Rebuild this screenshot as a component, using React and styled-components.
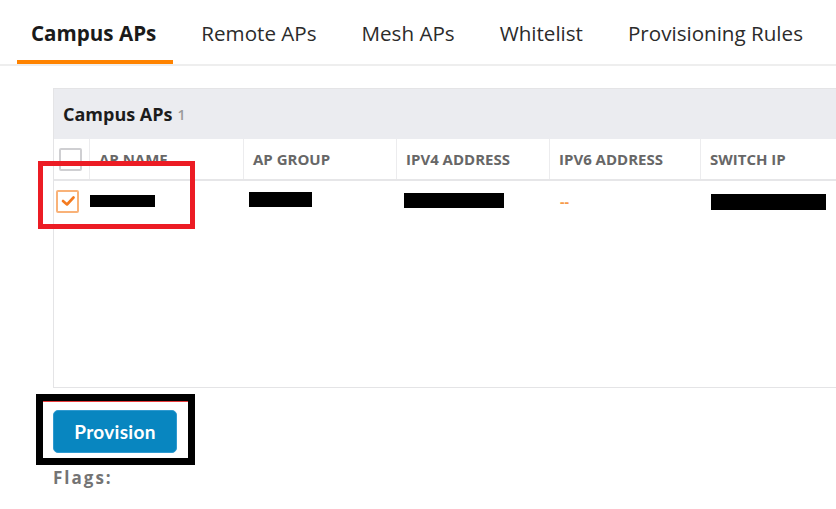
import React from "react";
import styled, { createGlobalStyle } from "styled-components";

// page defaults
const GlobalStyle = createGlobalStyle`
  body {
    margin: 0;
    background: #ffffff;
    font-family: "Open Sans", "Liberation Sans", sans-serif;
    overflow: hidden;
  }
`;

const tabs = ["Campus APs", "Remote APs", "Mesh APs", "Whitelist", "Provisioning Rules"];

const columns = [
  { label: "AP Name", width: 154 },
  { label: "AP Group", width: 153 },
  { label: "IPv4 Address", width: 153 },
  { label: "IPv6 Address", width: 151 },
  { label: "Switch IP", width: 200 },
];

const gridCols = `36px ${columns.map((c) => c.width + "px").join(" ")}`;

function CheckMark() {
  return (
    <svg width="14" height="12" viewBox="0 0 14 12">
      <polyline
        points="2,6 6,9.5 12.5,2.5"
        fill="none"
        stroke="#f47b20"
        strokeWidth="2.6"
        strokeLinecap="round"
        strokeLinejoin="round"
      />
    </svg>
  );
}

export default function App() {
  return (
    <Page>
      <GlobalStyle />
      <TabBar>
        {tabs.map((t, i) => (
          <Tab key={t} $active={i === 0}>
            {t}
          </Tab>
        ))}
      </TabBar>

      <Panel>
        <PanelHead>
          Campus APs <Count>1</Count>
        </PanelHead>
        <HeadRow>
          <HeadCell $first>
            <Check />
          </HeadCell>
          {columns.map((c) => (
            <HeadCell key={c.label}>{c.label}</HeadCell>
          ))}
        </HeadRow>
        <Row>
          <Cell>
            <Check $checked>
              <CheckMark />
            </Check>
          </Cell>
          <Cell>
            <Redacted $w={65} $h={12} $dx={-10} $dy={0} />
          </Cell>
          <Cell>
            <Redacted $w={63} $h={15} $dx={-5} $dy={-2} />
          </Cell>
          <Cell>
            <Redacted $w={100} $h={15} $dx={-3} $dy={-1} />
          </Cell>
          <Cell>
            <Dash>--</Dash>
          </Cell>
          <Cell>
            <Redacted $w={115} $h={16} $dx={0} $dy={1} />
          </Cell>
        </Row>
      </Panel>

      <Highlight>
        <ProvisionButton>Provision</ProvisionButton>
      </Highlight>

      <Flags>Flags:</Flags>

      {/* red annotation drawn over the selected row */}
      <RedMark />
    </Page>
  );
}

const Page = styled.div`
  position: relative;
  width: 836px;
  height: 509px;
  overflow: hidden;
`;

const TabBar = styled.div`
  display: flex;
  align-items: flex-end;
  height: 64px;
  padding-left: 17px;
  gap: 14px;
  border-bottom: 2px solid #eeeeee;
`;

const Tab = styled.div`
  height: 64px;
  box-sizing: border-box;
  padding: 19px 17px 0 14px;
  font-size: 20.6px;
  font-weight: ${(p) => (p.$active ? 700 : 400)};
  color: ${(p) => (p.$active ? "#1a1a1a" : "#2b2b2b")};
  white-space: nowrap;
  border-bottom: 4px solid ${(p) => (p.$active ? "#ff8300" : "transparent")};
`;

const Panel = styled.div`
  margin: 22px 0 0 53px;
  width: 900px;
  height: 300px;
  box-sizing: border-box;
  border: 1px solid #e4e4e6;
`;

const PanelHead = styled.div`
  height: 50px;
  display: flex;
  align-items: center;
  padding-left: 9px;
  background: #ebecf0;
  font-size: 18px;
  font-weight: 700;
  color: #1c1c1c;
`;

const Count = styled.span`
  margin-left: 5px;
  font-size: 14px;
  font-weight: 600;
  color: #9a9a9a;
`;

const HeadRow = styled.div`
  display: grid;
  grid-template-columns: ${gridCols};
  height: 40px;
  border-bottom: 2px solid #e6e6e8;
`;

const HeadCell = styled.div`
  display: flex;
  align-items: center;
  padding-left: ${(p) => (p.$first ? "5px" : "9px")};
  border-right: 1px solid #ececee;
  font-size: 15px;
  font-weight: 700;
  color: #676767;
  text-transform: uppercase;
  white-space: nowrap;
`;

const Row = styled.div`
  display: grid;
  grid-template-columns: ${gridCols};
  height: 40px;
`;

const Cell = styled.div`
  display: flex;
  align-items: center;
  padding-left: 10px;
  &:first-child {
    padding-left: 2px;
  }
`;

const Check = styled.span`
  display: inline-flex;
  align-items: center;
  justify-content: center;
  width: 23px;
  height: 23px;
  box-sizing: border-box;
  border: 2px solid ${(p) => (p.$checked ? "#f9b278" : "#cfcfd2")};
  border-radius: 2px;
  background: #fff;
`;

const Redacted = styled.span`
  display: inline-block;
  width: ${(p) => p.$w}px;
  height: ${(p) => p.$h}px;
  background: #000;
  position: relative;
  left: ${(p) => p.$dx}px;
  top: ${(p) => p.$dy}px;
`;

const Dash = styled.span`
  font-size: 14px;
  font-weight: 700;
  color: #f79a4a;
`;

const Highlight = styled.div`
  display: inline-block;
  margin: 6px 0 0 36px;
  padding: 9px 11px 5px 10px;
  border: 7px solid #000;
  box-shadow: inset 0 1px 0 #e83a3a;
`;

const ProvisionButton = styled.button`
  display: block;
  width: 124px;
  height: 43px;
  border: 1px solid #2f9ad0;
  border-radius: 5px;
  background: #0886c0;
  color: #ffffff;
  font-family: "Lato", "Liberation Sans", sans-serif;
  font-size: 19px;
  font-weight: 700;
  letter-spacing: 0.3px;
`;

const Flags = styled.div`
  margin: 1px 0 0 53px;
  font-size: 17px;
  font-weight: 700;
  letter-spacing: 2px;
  color: #747474;
`;

const RedMark = styled.div`
  position: absolute;
  left: 38px;
  top: 161px;
  width: 157px;
  height: 68px;
  box-sizing: border-box;
  border: 5px solid #ec1c24;
`;
